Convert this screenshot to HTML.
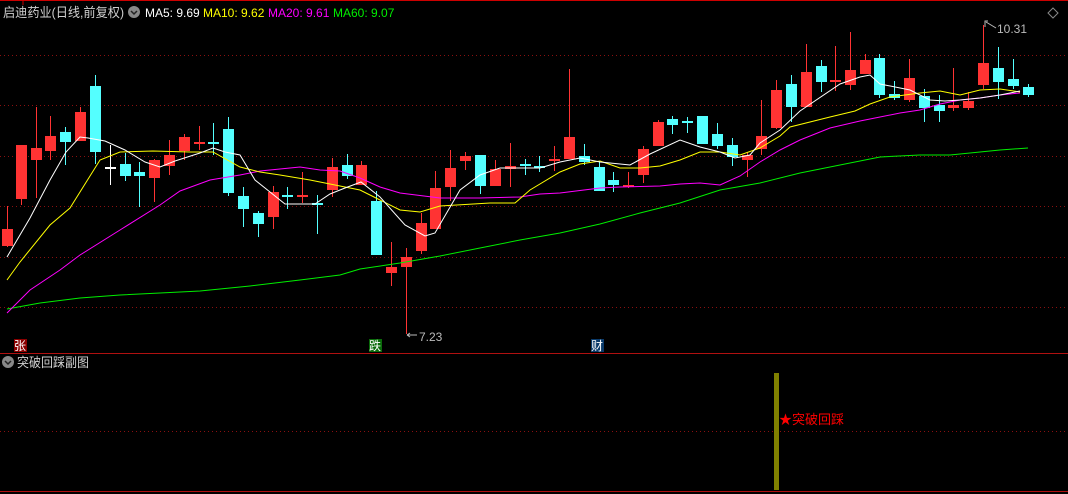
<!DOCTYPE html>
<html><head><meta charset="utf-8"><style>
html,body{margin:0;padding:0;background:#000;width:1068px;height:494px;overflow:hidden}
svg{display:block}
text{font-family:"Liberation Sans","Noto Sans CJK SC",sans-serif}
</style></head><body>
<svg id="s" width="1068" height="494" xmlns="http://www.w3.org/2000/svg">
<rect width="1068" height="494" fill="#000"/>
<line x1="0" y1="0.5" x2="1068" y2="0.5" stroke="#c00" />
<line x1="23" y1="0" x2="23" y2="5" stroke="#c00"/>
<g stroke="#8a1010" stroke-dasharray="1,3">
<line x1="0" y1="55.5" x2="1068" y2="55.5"/><line x1="0" y1="105.5" x2="1068" y2="105.5"/>
<line x1="0" y1="156.5" x2="1068" y2="156.5"/><line x1="0" y1="206.5" x2="1068" y2="206.5"/>
<line x1="0" y1="257.5" x2="1068" y2="257.5"/><line x1="0" y1="307.5" x2="1068" y2="307.5"/>
<line x1="0" y1="431.5" x2="1068" y2="431.5"/>
</g>
<line x1="0" y1="353.5" x2="1068" y2="353.5" stroke="#b01010"/>
<line x1="0" y1="491.5" x2="1068" y2="491.5" stroke="#b01010"/>
<g id="c"></g>
<g fill="none" stroke-width="1">
<polyline stroke="#00ee00" points="7,309 40,303 80,298 120,295 160,293 200,291 250,286 300,280 340,275 360,269 400,263 440,256 480,248 520,240 560,233 600,224 640,213 680,203 720,190 760,183 800,173 840,165 880,157 920,155 950,155 980,152 1000,150 1028,148"/>
<polyline stroke="#ff00ff" points="7,313 30,290 60,270 80,255 120,230 160,205 180,191 210,180 240,175 260,171 300,167 320,170 340,171 360,178 380,187 400,193 440,198 480,198 520,197 540,194 560,193 600,188 620,187 660,186 680,184 700,183 720,185 740,176 760,162 780,150 800,140 830,128 860,121 880,117 900,113 920,110 940,104 960,100 980,98 1000,95 1020,93"/>
<polyline stroke="#ffff00" points="7,280 20,262 50,225 70,208 100,160 120,152 153,151 190,152 213,152 240,167 260,172 280,175 310,180 340,186 360,190 380,200 400,210 420,212 440,206 490,203 515,203 530,190 560,172 580,164 600,161 620,168 640,168 660,166 680,160 700,152 720,152 740,155 760,148 780,136 790,127 830,117 855,111 870,104 890,97 920,93 940,91 960,95 980,90 1000,89 1020,92"/>
<polyline stroke="#ffffff" points="7,257 30,218 50,180 66,152 80,137 88,138 105,141 125,150 145,162 160,167 175,161 200,153 213,148 225,152 240,155 255,180 270,192 285,204 300,204 315,204 330,194 345,188 361,182 380,197 405,225 425,236 435,233 460,190 480,175 500,168 540,168 560,162 580,158 600,162 630,165 650,154 680,140 700,147 720,152 735,158 750,155 760,143 780,130 800,111 840,84 860,77 870,75 880,84 910,90 930,100 945,101 960,100 980,98 1000,95 1020,91"/>
</g>
<text x="3" y="17" font-size="13" fill="#d0d0d0" textLength="121" lengthAdjust="spacingAndGlyphs">启迪药业(日线,前复权)</text>
<circle cx="134" cy="12" r="6" fill="#888"/><path d="M131,11 l3,3 l3,-3" stroke="#222" stroke-width="1.5" fill="none"/>
<text x="145" y="17" font-size="12" fill="#fff">MA5: 9.69</text>
<text x="203" y="17" font-size="12" fill="#ffff00">MA10: 9.62</text>
<text x="268" y="17" font-size="12" fill="#ff00ff">MA20: 9.61</text>
<text x="333" y="17" font-size="12" fill="#00ee00">MA60: 9.07</text>
<path d="M1053,8 l5,5 l-5,5 l-5,-5z" stroke="#888" fill="none"/>
<path d="M985,27 v-6 h3 M986,22 l10,6" stroke="#bbb" fill="none"/>
<text x="997" y="33" font-size="12" fill="#bbb">10.31</text>
<path d="M407,335 h10 M407,335 l3,-2 M407,335 l3,2" stroke="#bbb" fill="none"/>
<text x="419" y="341" font-size="12" fill="#bbb">7.23</text>
<rect x="14" y="339" width="13" height="13" fill="#8a0000"/><text x="14" y="350" font-size="12" fill="#fff">张</text>
<rect x="369" y="339" width="13" height="13" fill="#0a6a0a"/><text x="369" y="350" font-size="12" fill="#fff">跌</text>
<rect x="591" y="339" width="13" height="13" fill="#0a3a6a"/><text x="591" y="350" font-size="12" fill="#fff">财</text>
<circle cx="8" cy="362" r="6" fill="#888"/><path d="M5,361 l3,3 l3,-3" stroke="#222" stroke-width="1.5" fill="none"/>
<text x="17" y="367" font-size="13" fill="#d0d0d0" textLength="72" lengthAdjust="spacingAndGlyphs">突破回踩副图</text>
<rect x="774" y="373" width="5" height="117" fill="#808000"/>
<text x="779" y="424" font-size="13" fill="#ff0000">★突破回踩</text>
</svg>
<script>
var d=[
[2,'r',229,246,206,247],[16,'r',145,199,145,205],[31,'r',148,160,107,198],[45,'r',136,151,116,160],[60,'c',132,142,127,165],[75,'r',112,141,107,141],[90,'c',86,152,75,164],[105,'w',168,168,145,185],[120,'c',164,176,153,181],[134,'c',172,176,162,207],[149,'r',160,178,159,202],[164,'r',155,166,140,175],[179,'r',137,151,134,160],[194,'r',143,143,126,150],[208,'c',143,143,123,155],[223,'c',129,193,117,196],[238,'c',196,209,187,227],[253,'c',213,224,211,237],[268,'r',192,217,186,229],[282,'c',195,197,187,209],[297,'r',195,197,172,203],[312,'c',204,204,195,234],[327,'r',167,190,158,197],[342,'c',165,176,154,179],[356,'r',165,185,161,185],[371,'c',201,255,191,255],[386,'r',267,273,242,286],[401,'r',257,267,248,334],[416,'r',223,251,213,254],[430,'r',188,229,171,229],[445,'r',168,187,150,201],[460,'r',156,161,152,170],[475,'c',155,186,155,194],[490,'r',169,186,160,186],[505,'r',166,169,143,187],[520,'c',165,165,159,175],[534,'c',167,167,156,172],[549,'r',160,160,146,171],[564,'r',137,159,69,159],[579,'c',156,162,144,165],[594,'c',167,191,162,191],[608,'c',180,185,172,192],[623,'r',186,186,172,188],[638,'r',149,175,146,183],[653,'r',122,146,120,146],[667,'c',119,125,116,134],[682,'c',122,122,117,133],[697,'c',116,144,116,144],[712,'c',134,146,123,149],[727,'c',145,157,138,166],[742,'r',155,160,152,177],[756,'r',136,149,100,155],[771,'r',90,128,80,129],[786,'c',84,107,75,122],[801,'r',72,107,44,107],[816,'c',66,82,60,92],[830,'r',81,81,46,91],[845,'r',70,85,32,90],[860,'r',60,74,54,74],[874,'c',58,95,54,98],[889,'c',94,98,81,100],[904,'r',78,100,59,102],[919,'c',96,108,89,122],[934,'c',105,111,95,122],[948,'r',105,108,68,111],[963,'r',101,108,92,110],[978,'r',63,85,25,89],[993,'c',68,82,47,99],[1008,'c',79,86,59,89],[1023,'c',87,95,84,97]];
var col={r:'#ff3333',c:'#54ffff',w:'#ffffff'},h='';
d.forEach(function(k){var x=k[0],c=col[k[1]],cx=x+5.5;
h+='<line x1="'+cx+'" y1="'+k[4]+'" x2="'+cx+'" y2="'+k[5]+'" stroke="'+c+'"/>';
var bh=Math.max(k[3]-k[2],1);if(k[3]-k[2]<2){h+='<rect x="'+x+'" y="'+(k[2]-1)+'" width="11" height="2" fill="'+c+'"/>';}
else h+='<rect x="'+x+'" y="'+k[2]+'" width="11" height="'+bh+'" fill="'+c+'"/>';});
document.getElementById('c').innerHTML=h;
</script>
</body></html>
